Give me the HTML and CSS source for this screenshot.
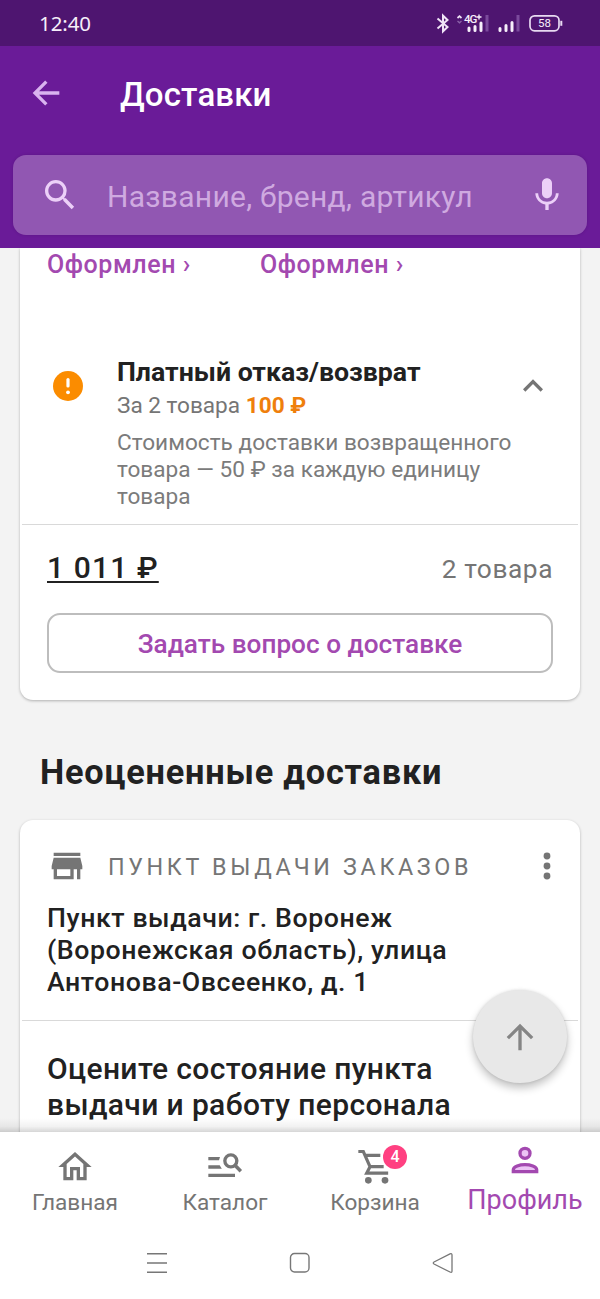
FILE: index.html
```html
<!DOCTYPE html>
<html lang="ru">
<head>
<meta charset="utf-8">
<title>Доставки</title>
<link rel="stylesheet" href="styles.css">
</head>
<body>
<div class="phone">
  <div class="status">
    <span class="clock">12:40</span>
    <svg class="status-icons" width="132" height="24" viewBox="0 0 132 24" fill="none">
      <path d="M2.500 7.500l10 8.500L8 20.300V4.700L12.500 9l-10 8.500" stroke="#efe4f6" stroke-width="2"/>
      <path d="M22.500 7l2-1.800 2 1.800" stroke="#efe4f6" stroke-width="1.700"/>
      <path d="M22.500 10l2 1.800 2-1.800" stroke="#8b63a8" stroke-width="1.300"/>
      <text x="29" y="12.300" class="net">4G</text>
      <path d="M41.500 6h5M44 3.500v5" stroke="#f6effa" stroke-width="1.400"/>
      <path d="M34 19.500v-2.500M40 19.500v-4M46 19.500v-7.500" stroke="#f6effa" stroke-width="3" stroke-linecap="round"/>
      <path d="M52 20.500V4M83 20.500V4" stroke="#7b4a9c" stroke-width="3"/>
      <path d="M65 19.500v-2M71 19.500v-5M77 19.500v-8" stroke="#f6effa" stroke-width="3" stroke-linecap="round"/>
      <rect x="95" y="4.800" width="29" height="15" rx="4.500" stroke="#e8daf1" stroke-width="1.700"/>
      <path d="M126.300 9.800v5" stroke="#e8daf1" stroke-width="2"/>
      <text x="109.500" y="16.300" text-anchor="middle" class="batt">58</text>
    </svg>
  </div>
  <header class="appbar">
    <div class="title-row">
      <svg class="icon back" viewBox="0 0 24 24" fill="#d9b3ef"><path d="M20 11H7.830l5.080-5.080L11.500 4.500 4 12l7.500 7.500 1.410-1.410L7.830 13H20z"/></svg>
      <h1 class="title">Доставки</h1>
    </div>
    <div class="search">
      <svg class="icon" viewBox="0 0 24 24" fill="#ecd0f8"><path d="M15.500 14h-.79l-.28-.27A6.471 6.471 0 0 0 16 9.500 6.500 6.500 0 1 0 9.500 16c1.610 0 3.090-.59 4.230-1.570l.27.28v.79l5 4.990L20.490 19l-4.990-5zm-6 0C7.010 14 5 11.990 5 9.500S7.010 5 9.500 5 14 7.010 14 9.500 11.990 14 9.500 14z"/></svg>
      <span class="placeholder">Название, бренд, артикул</span>
      <svg class="icon" viewBox="0 0 24 24" fill="#ecd0f8"><path d="M12 14c1.660 0 2.990-1.340 2.990-3L15 5c0-1.660-1.340-3-3-3S9 3.340 9 5v6c0 1.660 1.340 3 3 3zm5.300-3c0 3-2.540 5.100-5.300 5.100S6.700 14 6.700 11H5c0 3.410 2.720 6.230 6 6.720V21h2v-3.280c3.280-.48 6-3.300 6-6.720h-1.700z"/></svg>
    </div>
  </header>

  <main class="scroll">
    <section class="card card-order">
      <div class="states"><span class="state">Оформлен ›</span><span class="state">Оформлен ›</span></div>
      <div class="notice">
        <span class="warn"><svg width="30" height="30" viewBox="0 0 30 30"><circle cx="15" cy="15" r="15" fill="#fb8c00"/><path d="M15 8.500v6.500" stroke="#fff" stroke-width="3.200" stroke-linecap="round"/><circle cx="15" cy="21.300" r="1.900" fill="#fff"/></svg></span>
        <div class="notice-body">
          <h3 class="notice-title">Платный отказ/возврат</h3>
          <p class="notice-sum">За 2 товара <b class="fee">100 ₽</b></p>
          <p class="notice-text">Стоимость доставки возвращенного<br>товара — 50 ₽ за каждую единицу<br>товара</p>
        </div>
        <svg class="chevron" viewBox="0 0 24 24" fill="#757575"><path d="M12 8l-6 6 1.410 1.410L12 10.830l4.590 4.580L18 14z"/></svg>
      </div>
      <div class="total"><span class="price">1 011 ₽</span><span class="count">2 товара</span></div>
      <button class="ask">Задать вопрос о доставке</button>
    </section>

    <h2 class="heading">Неоцененные доставки</h2>

    <section class="card card-point">
      <div class="point-head">
        <svg class="icon" viewBox="0 0 24 24" fill="#757575"><path d="M4 4h16v2H4zM21.200 14v-2L20 7H4l-1.200 5v2H4v6h12v-6h2v6h2v-6zM14 18H6v-4h8z"/></svg>
        <span class="label">ПУНКТ ВЫДАЧИ ЗАКАЗОВ</span>
        <svg class="icon" viewBox="0 0 24 24" fill="#757575"><circle cx="12" cy="6" r="2.050"/><circle cx="12" cy="12" r="2.050"/><circle cx="12" cy="18" r="2.050"/></svg>
      </div>
      <p class="address">Пункт выдачи: г. Воронеж<br>(Воронежская область), улица<br>Антонова-Овсеенко, д. 1</p>
      <p class="rate">Оцените состояние пункта<br>выдачи и работу персонала</p>
    </section>
    <div class="shade"></div>
    <div class="fab"><svg class="icon" viewBox="0 0 24 24" fill="#858585"><path d="M4 12l1.410 1.410L11 7.830V20h2V7.830l5.580 5.590L20 12l-8-8z"/></svg></div>
  </main>

  <nav class="tabs">
    <div class="tab">
      <svg class="icon" viewBox="0 0 24 24" fill="#757575"><path d="M12 5.690l5 4.500V18h-2v-6H9v6H7v-7.810l5-4.500M12 3L2 12h3v8h6v-6h2v6h6v-8h3z"/></svg>
      <span class="tab-name">Главная</span>
    </div>
    <div class="tab">
      <svg class="icon" viewBox="0 0 24 24" fill="#757575"><path d="M2 6h7l-.6 2H2zM2 11h6.800l1.300 2H2zM2 16h16v2H2z"/><circle cx="15.500" cy="8.300" r="3.600" fill="none" stroke="#757575" stroke-width="2"/><path d="M18 11l3.500 3.500" stroke="#757575" stroke-width="2.100"/></svg>
      <span class="tab-name">Каталог</span>
    </div>
    <div class="tab">
      <div class="cart">
        <svg class="icon" viewBox="0 0 24 24" fill="none" stroke="#757575" stroke-width="1.900"><path d="M2 2.700h3l4 9.100h8.200M6.600 5h8.600M9 11.800l-2 3.900h12.900"/><circle cx="8" cy="20" r="2" fill="#757575" stroke="none"/><circle cx="18" cy="20" r="2" fill="#757575" stroke="none"/></svg>
        <span class="badge">4</span>
      </div>
      <span class="tab-name">Корзина</span>
    </div>
    <div class="tab tab-active">
      <svg class="icon" viewBox="0 0 24 24"><circle cx="12" cy="8" r="3" fill="#ecc4f5" stroke="#a349b0" stroke-width="2"/><path d="M5 19v-1.200c0-1.900 3.800-3 7-3s7 1.100 7 3V19z" fill="#ecc4f5" stroke="#a349b0" stroke-width="2"/></svg>
      <span class="tab-name">Профиль</span>
    </div>
  </nav>
  <div class="sysnav">
    <svg width="22" height="22" viewBox="0 0 22 22" fill="none" stroke="#777" stroke-width="1.400"><path d="M1 1.800h20M1 11h20M1 20.200h20"/></svg>
    <svg width="22" height="22" viewBox="0 0 22 22" fill="none" stroke="#777" stroke-width="1.400"><rect x="1.500" y="1.500" width="18.500" height="18.500" rx="4"/></svg>
    <svg width="22" height="22" viewBox="0 0 22 22" fill="none" stroke="#777" stroke-width="1.300"><path d="M2 10L18 1.800q2-.8 2 1.200v16q0 2-2 1L2 12q-1.500-1 0-2z"/></svg>
  </div>
</div>
</body>
</html>
```

FILE: styles.css
```css
* { box-sizing: border-box; }
body { margin: 0; font-family: Roboto, "Noto Sans", sans-serif; background: #fff; color: #212121; }
h1, h2, h3, p { margin: 0; }
svg { display: block; flex: none; }
.icon { width: 40px; height: 40px; }

.phone { width: 600px; height: 1299px; display: flex; flex-direction: column; overflow: hidden; white-space: nowrap; }

.status { flex: none; height: 46px; padding: 0 33px 0 39px; background: #4e1570; display: flex; align-items: center; justify-content: space-between; }
.clock { font: 400 20.500px/46px "Noto Sans", sans-serif; color: #f6effa; letter-spacing: -.1px; }
.net { font: 500 11.500px Roboto, sans-serif; fill: #f6effa; letter-spacing: -1px; }
.batt { font: 400 11.500px Roboto, sans-serif; fill: #f6effa; }

.appbar { flex: none; height: 202px; background: #6a1b98; padding: 27px 13px 0; }
.title-row { height: 42px; display: flex; align-items: center; padding-left: 13px; gap: 54px; }
.back { margin-top: -2px; }
.title { margin-top: 2px; font-size: 33px; line-height: 42px; font-weight: 500; color: #fff; letter-spacing: .15px; }
.search { margin-top: 40px; height: 80px; border-radius: 13px; background: #9157b2; display: flex; align-items: center; padding: 0 20px 0 27px; box-shadow: 0 0 3px rgba(50,0,80,.25); }
.placeholder { flex: 1; margin: 4px 0 0 27px; font-size: 30px; line-height: 40px; color: #cfaae0; letter-spacing: .28px; }

.scroll { position: relative; flex: none; height: 884px; overflow: hidden; background: #f3f3f3; padding: 0 20px; }
.card { background: #fff; box-shadow: 0 1px 3px rgba(0,0,0,.28); }
.card-order { height: 452px; border-radius: 0 0 13px 13px; }
.states { height: 30px; display: flex; gap: 69px; padding-left: 27px; }
.state { font-size: 25px; line-height: 33px; font-weight: 500; color: #a349b0; letter-spacing: .58px; }
.notice { height: 247px; margin: 0 2px; padding: 78px 25px 0 31px; display: flex; border-bottom: 1.500px solid #d9d9d9; }
.warn { margin-top: 15px; }
.notice-body { flex: 1; margin-left: 34px; }
.notice-title { font-size: 26.700px; line-height: 32px; font-weight: 700; }
.notice-sum { margin-top: 3px; font-size: 22.600px; line-height: 29px; color: #757575; }
.fee { color: #ef7f0c; font-weight: 700; }
.notice-text { margin-top: 9px; font-size: 22.600px; line-height: 27px; color: #7b7b7b; letter-spacing: .03px; }
.chevron { width: 40px; height: 40px; margin-top: 10px; }
.total { height: 88px; padding: 26px 27px 0; display: flex; justify-content: space-between; }
.price { font-size: 30px; line-height: 34px; font-weight: 500; letter-spacing: 1.150px; text-decoration: underline; text-decoration-thickness: 1.500px; text-underline-offset: 3px; }
.count { font-size: 26.300px; line-height: 37px; color: #757575; letter-spacing: .55px; }
.ask { display: block; width: 506px; height: 60px; margin: 0 27px; padding: 1px 0 0; background: #fff; border: 2px solid #bdbdbd; border-radius: 13px; font: 500 26.200px/56px Roboto, sans-serif; color: #a349b0; }
.heading { height: 120px; padding: 54px 0 0 20px; font-size: 34.300px; line-height: 36px; font-weight: 700; letter-spacing: .8px; }
.card-point { height: 340px; border-radius: 13px 13px 0 0; }
.point-head { height: 80px; display: flex; align-items: center; padding: 12px 13px 0 27px; }
.label { flex: 1; margin: 2px 0 0 21px; font-size: 23.300px; line-height: 28px; letter-spacing: 3.650px; color: #757575; }
.address { margin: 0 2px; height: 121px; padding: 2px 25px 0; font-size: 26.700px; line-height: 32px; font-weight: 500; letter-spacing: .58px; border-bottom: 1.500px solid #d9d9d9; }
.rate { padding: 30px 27px 0; font-size: 30px; line-height: 36px; font-weight: 500; letter-spacing: .37px; }
.shade { position: absolute; left: 0; right: 0; bottom: 0; height: 14px; background: linear-gradient(rgba(0,0,0,0), rgba(0,0,0,.05) 60%, rgba(0,0,0,.16)); }
.fab { position: absolute; right: 33px; bottom: 49px; width: 94px; height: 93px; border-radius: 50%; background: #e8e8e8; display: flex; align-items: center; justify-content: center; box-shadow: 0 5px 9px rgba(0,0,0,.24), 0 0 3px rgba(0,0,0,.12); }

.tabs { flex: none; height: 96px; display: grid; grid-template-columns: repeat(4, 150px); background: #fff; }
.tab { display: flex; flex-direction: column; align-items: center; padding-top: 15px; color: #757575; }
.tab-name { font-size: 22.600px; line-height: 30px; margin-top: 1px; }
.tab-active { padding-top: 8px; color: #a349b0; }
.tab-active .tab-name { font-size: 27px; line-height: 34px; margin-top: 3px; }
.cart { position: relative; }
.badge { position: absolute; left: 28px; top: -2px; width: 24px; height: 24px; border-radius: 50%; background: #ff4081; color: #fff; font-size: 16px; line-height: 24px; font-weight: 500; text-align: center; }
.sysnav { flex: none; height: 71px; display: flex; justify-content: center; gap: 121px; padding-top: 24px; }
```
